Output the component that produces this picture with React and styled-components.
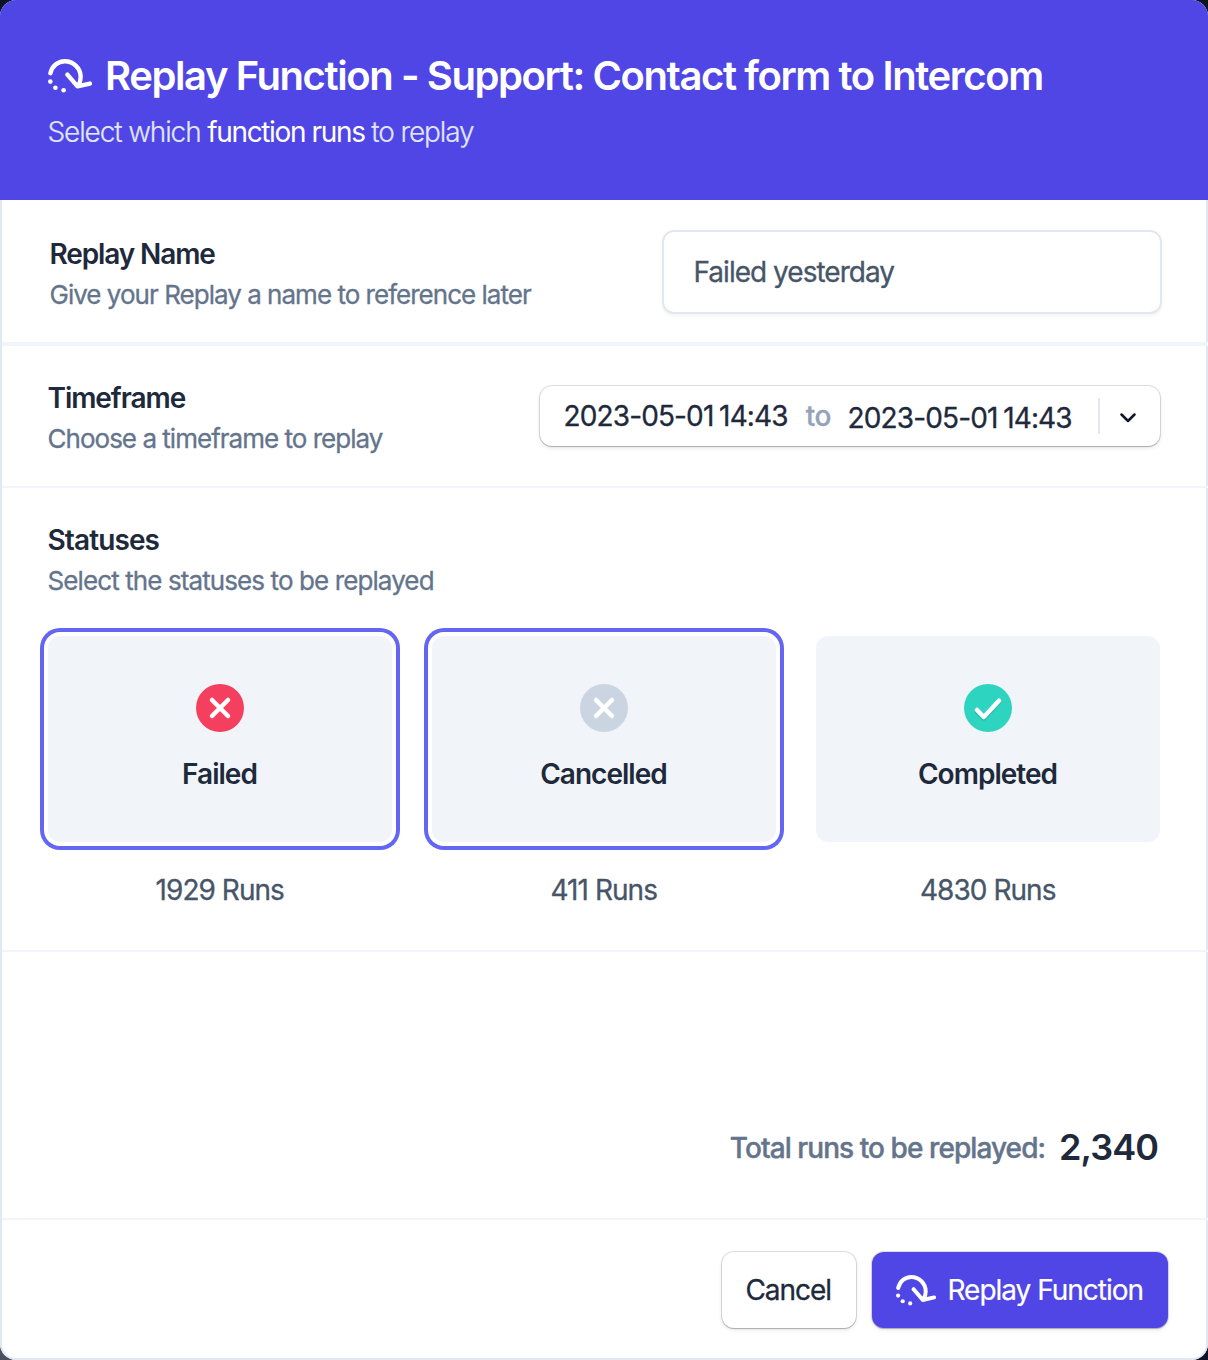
import React from "react";
import styled, { createGlobalStyle } from "styled-components";

const GlobalStyle = createGlobalStyle`
  *, *::before, *::after { box-sizing: border-box; }
  body {
    margin: 0;
    background: linear-gradient(to right, #4b4f5e 0, #10142a 50%) bottom / 100% 40px no-repeat, #0b1324;
    font-family: Inter, "Liberation Sans", sans-serif;
    color: #1e293b;
  }
  button, input { font: inherit; color: inherit; }
`;

const Modal = styled.main`
  display: flex;
  flex-direction: column;
  width: 1208px;
  height: 1360px;
  border-radius: 16px;
  overflow: hidden;
  background: #fff;
`;

const Header = styled.header`
  height: 200px;
  flex: none;
  padding: 52px 48px 0;
  background: #4f46e5;
  color: #fff;
`;

const TitleRow = styled.div`
  display: flex;
  align-items: center;
  gap: 13px;
  height: 48px;
`;

const Title = styled.h1`
  margin: 0;
  font-size: 40px;
  line-height: 48px;
  font-weight: 600;
  letter-spacing: -1.41px;
  white-space: nowrap;
`;

const Subtitle = styled.p`
  margin: 14px 0 0;
  font-size: 28px;
  line-height: 36px;
  font-weight: 300;
  letter-spacing: -1.13px;
  text-indent: -0.5px;
  -webkit-text-stroke: 0.2px currentColor;
  color: #e0e7ff;

  strong {
    font-weight: 400;
    letter-spacing: -1.36px;
    -webkit-text-stroke: 0;
    color: #fff;
  }
`;

const Body = styled.div`
  flex: 1;
  display: flex;
  flex-direction: column;
  border: 2px solid #e2e8f0;
  border-top: 0;
  border-radius: 0 0 16px 16px;
`;

const Section = styled.section`
  display: flex;
  justify-content: space-between;
  flex: none;
  height: ${(p) => p.$height}px;
  margin-right: -2px;
  padding: ${(p) => p.$padding};
  border-bottom: ${(p) => p.$line || 2}px solid #f1f5f9;
`;

const StatusSection = styled(Section)`
  flex-direction: column;
  justify-content: flex-start;
`;

const TotalSection = styled(Section)`
  align-items: flex-end;
  justify-content: flex-end;
`;

const FieldText = styled.div`
  padding-top: ${(p) => p.$top || 0}px;
`;

const FieldControl = styled.div`
  padding-top: 8px;
`;

const Label = styled.h2`
  margin: 0;
  font-size: 28px;
  line-height: 40px;
  font-weight: 600;
  letter-spacing: ${(p) => p.$track || -0.98}px;
  text-indent: -0.5px;
`;

const Hint = styled.p`
  margin: 1px 0 0;
  font-size: 26px;
  line-height: 40px;
  letter-spacing: ${(p) => p.$track || -0.98}px;
  text-indent: -0.5px;
  -webkit-text-stroke: 0.3px currentColor;
  color: #64748b;
`;

const NameInput = styled.input`
  width: 500px;
  height: 84px;
  padding: 0 30px 0 29.5px;
  border: 2px solid #e2e8f0;
  border-radius: 12px;
  outline: none;
  background: #fff;
  box-shadow: 0 2px 4px rgba(0, 0, 0, 0.05);
  font-size: 28px;
  letter-spacing: -0.98px;
  -webkit-text-stroke: 0.3px currentColor;
  color: #475569;
`;

const RangePicker = styled.button`
  display: flex;
  align-items: center;
  width: 620px;
  height: 60px;
  padding: 0 24px 0 23.5px;
  border: 0;
  border-radius: 12px;
  background: #fff;
  box-shadow: 0 0 0 1px rgba(0, 0, 0, 0.12), 0 1px 1px rgba(0, 0, 0, 0.16), 0 2px 4px rgba(0, 0, 0, 0.1);
  font-size: 28px;
  line-height: 36px;
  white-space: nowrap;
`;

const DateText = styled.span`
  letter-spacing: -0.87px;
  word-spacing: -1.3px;
  -webkit-text-stroke: 0.3px currentColor;
  padding-top: ${(p) => p.$drop || 0}px;
`;

const To = styled.span`
  margin: 0 16.5px 0 18px;
  font-weight: 500;
  letter-spacing: -0.4px;
  -webkit-text-stroke: 0.3px currentColor;
  color: #94a3b8;
`;

const Separator = styled.span`
  width: 2px;
  height: 36px;
  margin: 0 20px 0 auto;
  background: #e2e8f0;
`;

const StatusGrid = styled.div`
  display: grid;
  grid-template-columns: repeat(3, 344px);
  column-gap: 40px;
  margin-top: 35px;
`;

const StatusItem = styled.div`
  display: flex;
  flex-direction: column;
  align-items: center;
  gap: 28px;
`;

const StatusCard = styled.button`
  display: flex;
  flex-direction: column;
  align-items: center;
  gap: 22px;
  width: 344px;
  height: 206px;
  padding: 48px 0 0;
  border: 0;
  border-radius: 12px;
  background: #f1f5f9;
  box-shadow: ${(p) => (p.$selected ? "0 0 0 4px #fff, 0 0 0 8px #6366f1" : "none")};
`;

const StatusName = styled.span`
  margin-right: 1px;
  font-size: 28px;
  line-height: 40px;
  font-weight: 600;
  letter-spacing: -0.98px;
`;

const Runs = styled.span`
  margin-right: 0.5px;
  font-size: 28px;
  line-height: 40px;
  letter-spacing: -0.95px;
  -webkit-text-stroke: 0.3px currentColor;
  color: #475569;
`;

const TotalLabel = styled.span`
  margin: 0 14px 2px 0;
  font-size: 28px;
  line-height: 40px;
  font-weight: 500;
  letter-spacing: -0.93px;
  -webkit-text-stroke: 0.4px currentColor;
  color: #64748b;
`;

const TotalCount = styled.span`
  margin-bottom: 1px;
  font-size: 36px;
  line-height: 44px;
  font-weight: 600;
  letter-spacing: -0.95px;
`;

const Footer = styled.footer`
  display: flex;
  justify-content: flex-end;
  gap: 16px;
  padding: 32px 38px 0 0;
`;

const Button = styled.button`
  display: flex;
  align-items: center;
  justify-content: center;
  gap: 12px;
  width: ${(p) => p.$width}px;
  height: 76px;
  padding: 0 1.5px 0 0;
  border: 0;
  border-radius: 12px;
  background: ${(p) => (p.$primary ? "#4f46e5" : "#fff")};
  color: ${(p) => (p.$primary ? "#fff" : "#1e293b")};
  box-shadow: 0 0 0 1px rgba(0, 0, 0, 0.12), 0 1px 1px rgba(0, 0, 0, 0.16), 0 2px 4px rgba(0, 0, 0, 0.1);
  font-size: 28px;
  letter-spacing: -1.02px;
  -webkit-text-stroke: ${(p) => (p.$primary ? "0.2px" : "0.3px")} currentColor;
  white-space: nowrap;
`;

const ChevronIcon = styled.svg`
  flex: none;
  margin-top: 4px;
`;

const ReplayIcon = ({ width, height }) => (
  <svg width={width} height={height} viewBox="0 0 44 34" fill="none">
    <path
      d="M2.4 14.2C4.1 7.1 9.8 2.2 16.8 2.2c8.8 0 15.9 7.1 15.9 15.9 0 3.2-.9 6.1-2.6 8.7M19.4 15.6l10.1 11.8 12.4-2.8"
      stroke="currentColor"
      strokeWidth="4.4"
      strokeLinecap="round"
      strokeLinejoin="round"
    />
    <circle cx="2.3" cy="22.6" r="2.3" fill="currentColor" />
    <circle cx="7.4" cy="28.8" r="2.3" fill="currentColor" />
    <circle cx="15.6" cy="31.2" r="2.3" fill="currentColor" />
  </svg>
);

const StatusIcon = ({ color, done }) => (
  <svg width="48" height="48" viewBox="0 0 48 48" fill="none">
    <circle cx="24" cy="24" r="24" fill={color} />
    {done && (
      <path
        d="M13 27.6l6.8 6.9L35 18.3"
        stroke="#0f766e"
        strokeOpacity=".3"
        strokeWidth="4.4"
        strokeLinecap="round"
        strokeLinejoin="round"
      />
    )}
    <path
      d={done ? "M13 26l6.8 7L35 16.7" : "M16 16l16 16M32 16L16 32"}
      stroke="#fff"
      strokeWidth="4.5"
      strokeLinecap="round"
      strokeLinejoin="round"
    />
  </svg>
);

const Chevron = () => (
  <ChevronIcon width="16" height="10" viewBox="0 0 16 10" fill="none">
    <path
      d="M1.5 1.5L8 8l6.5-6.5"
      stroke="#0f172a"
      strokeWidth="2.5"
      strokeLinecap="round"
      strokeLinejoin="round"
    />
  </ChevronIcon>
);

const statuses = [
  { name: "Failed", runs: "1929 Runs", color: "#f43f5e", selected: true },
  { name: "Cancelled", runs: "411 Runs", color: "#cbd5e1", selected: true },
  { name: "Completed", runs: "4830 Runs", color: "#2dd4bf", done: true },
];

export default function App() {
  return (
    <>
      <GlobalStyle />
      <Modal>
        <Header>
          <TitleRow>
            <ReplayIcon width={44} height={34} />
            <Title>Replay Function - Support: Contact form to Intercom</Title>
          </TitleRow>
          <Subtitle>
            Select which <strong>function runs</strong> to replay
          </Subtitle>
        </Header>
        <Body>
          <Section $height={146} $line={4} $padding="30px 46px 0 48px">
            <FieldText $top={4}>
              <Label $track={-1.12}>Replay Name</Label>
              <Hint>Give your Replay a name to reference later</Hint>
            </FieldText>
            <NameInput defaultValue="Failed yesterday" />
          </Section>
          <Section $height={142} $padding="32px 48px 0 46px">
            <FieldText>
              <Label $track={-1.06}>Timeframe</Label>
              <Hint>Choose a timeframe to replay</Hint>
            </FieldText>
            <FieldControl>
              <RangePicker>
                <DateText>2023-05-01 14:43</DateText>
                <To>to</To>
                <DateText $drop={4}>2023-05-01 14:43</DateText>
                <Separator />
                <Chevron />
              </RangePicker>
            </FieldControl>
          </Section>
          <StatusSection $height={464} $padding="32px 46px 0">
            <Label $track={-0.88}>Statuses</Label>
            <Hint $track={-0.9}>Select the statuses to be replayed</Hint>
            <StatusGrid>
              {statuses.map((s) => (
                <StatusItem key={s.name}>
                  <StatusCard $selected={s.selected}>
                    <StatusIcon color={s.color} done={s.done} />
                    <StatusName>{s.name}</StatusName>
                  </StatusCard>
                  <Runs>{s.runs}</Runs>
                </StatusItem>
              ))}
            </StatusGrid>
          </StatusSection>
          <TotalSection $height={268} $padding="0 50px 48px 0">
            <TotalLabel>Total runs to be replayed:</TotalLabel>
            <TotalCount>2,340</TotalCount>
          </TotalSection>
          <Footer>
            <Button $width={134}>Cancel</Button>
            <Button $primary $width={296}>
              <ReplayIcon width={40} height={31} />
              Replay Function
            </Button>
          </Footer>
        </Body>
      </Modal>
    </>
  );
}
